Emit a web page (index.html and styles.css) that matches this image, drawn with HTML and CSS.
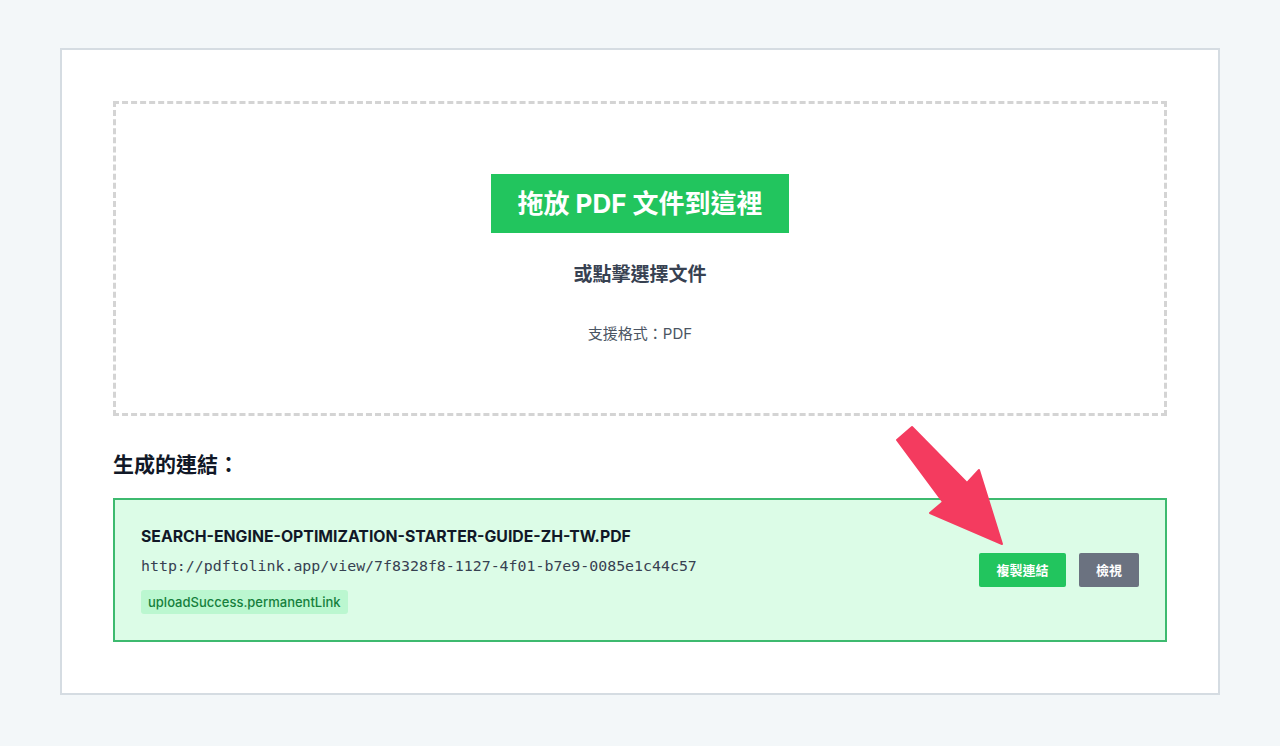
FILE: index.html
```html
<!DOCTYPE html>
<html lang="zh-Hant">
<head>
<meta charset="utf-8">
<title>PDF to Link</title>
<link rel="stylesheet" href="styles.css">
</head>
<body>
<main class="card">
  <section class="dropzone">
    <div class="drop-btn">拖放 PDF 文件到這裡</div>
    <p class="drop-sub">或點擊選擇文件</p>
    <p class="drop-note">支援格式：PDF</p>
  </section>
  <h2 class="links-title">生成的連結：</h2>
  <section class="result">
    <div class="result-info">
      <div class="file-name">SEARCH-ENGINE-OPTIMIZATION-STARTER-GUIDE-ZH-TW.PDF</div>
      <div class="file-url">http://pdftolink.app/view/7f8328f8-1127-4f01-b7e9-0085e1c44c57</div>
      <span class="badge">uploadSuccess.permanentLink</span>
    </div>
    <div class="result-actions">
      <button class="btn btn-copy">複製連結</button>
      <button class="btn btn-view">檢視</button>
    </div>
  </section>
</main>
<svg class="arrow" width="140" height="140" viewBox="0 0 140 140" aria-hidden="true">
  <polygon points="7,20 22,7 77,63 89,50 112,124 40,93 53,82" fill="#f43b5f" stroke="#f43b5f" stroke-width="2" stroke-linejoin="round"/>
</svg>
</body>
</html>
```
FILE: styles.css
```css
* { box-sizing: border-box; }
html, body { margin: 0; padding: 0; }
body {
  background: #f3f7f9;
  font-family: "Inter", "Noto Sans CJK TC", "Noto Sans", sans-serif;
  color: #111827;
  height: 746px;
  overflow: hidden;
  position: relative;
}
.card {
  margin: 48px 60px 0 60px;
  background: #ffffff;
  border: 2px solid #d5dce2;
  padding: 51px;
  height: 647px;
}
.dropzone {
  border: 3px dashed #d4d4d4;
  height: 315px;
  padding-top: 70px;
  display: flex;
  flex-direction: column;
  align-items: center;
}
.drop-btn {
  background: #22c55e;
  color: #ffffff;
  font-size: 26px;
  font-weight: 700;
  height: 59px;
  line-height: 59px;
  width: 298px;
  text-align: center;
  white-space: nowrap;
}
.drop-sub {
  margin: 28px 0 0;
  font-size: 19px;
  font-weight: 700;
  line-height: 28px;
  color: #374151;
}
.drop-note {
  margin: 35px 0 0;
  font-size: 15px;
  line-height: 20px;
  color: #4b5563;
}
.links-title {
  margin: 35px 0 19px;
  font-size: 21px;
  line-height: 28px;
  font-weight: 700;
  color: #111827;
}
.result {
  border: 2px solid #3dba6f;
  background: #dcfce7;
  height: 144px;
  padding: 27px 26px 26px 26px;
  display: flex;
  align-items: center;
  justify-content: space-between;
}
.result-info {
  display: flex;
  flex-direction: column;
  align-items: flex-start;
  align-self: flex-start;
}
.file-name {
  font-size: 15.8px;
  line-height: 20px;
  font-weight: 700;
  color: #111827;
}
.file-url {
  margin-top: 8px;
  font-family: "DejaVu Sans Mono", "Liberation Mono", monospace;
  font-size: 14.9px;
  line-height: 22px;
  color: #374151;
}
.badge {
  margin-top: 13px;
  background: #bbf7d0;
  color: #15803d;
  font-size: 13px;
  font-weight: 500;
  line-height: 24px;
  height: 24px;
  padding: 0 7px;
  border-radius: 3px;
}
.result-actions {
  display: flex;
  gap: 13px;
  margin-bottom: 2px;
}
.btn {
  border: 0;
  font-family: "Inter", "Noto Sans CJK TC", sans-serif;
  font-size: 13px;
  font-weight: 700;
  color: #ffffff;
  height: 34px;
  padding: 0;
  border-radius: 2px;
  cursor: pointer;
}
.btn-copy { background: #22c55e; width: 87px; }
.btn-view { background: #6b7280; width: 60px; }
.arrow {
  position: absolute;
  left: 890px;
  top: 420px;
}
```
